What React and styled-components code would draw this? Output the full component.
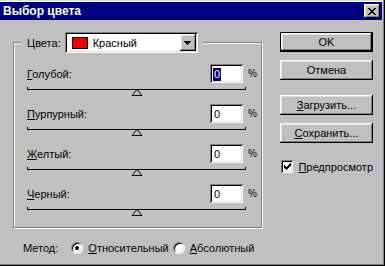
import styled, { createGlobalStyle } from "styled-components";

const GlobalStyle = createGlobalStyle`
  html, body {
    margin: 0;
    padding: 0;
    background: #c0c0c0;
  }
  body {
    font-family: "Liberation Sans", Arial, sans-serif;
    font-size: 11px;
    color: #000;
  }
`;

const raised = `
  box-shadow: inset -1px -1px 0 #000, inset 1px 1px 0 #fff,
    inset -2px -2px 0 #808080, inset 2px 2px 0 #dfdfdf;
`;

const sunken = `
  box-shadow: inset 1px 1px 0 #808080, inset -1px -1px 0 #fff,
    inset 2px 2px 0 #000, inset -2px -2px 0 #dfdfdf;
`;

const Window = styled.div`
  width: 385px;
  height: 266px;
  box-sizing: border-box;
  padding: 2px 3px 2px 0;
  background: #c0c0c0;
  box-shadow: inset -1px -1px 0 #000, inset -2px -2px 0 #808080,
    inset 0 1px 0 #dfdfdf, inset 0 2px 0 #fff;
  display: flex;
  flex-direction: column;
`;

const TitleBar = styled.div`
  height: 18px;
  background: #000080;
  color: #fff;
  display: flex;
  align-items: center;
  justify-content: space-between;
  padding: 0 2px 0 3px;
  font-weight: bold;
  font-size: 12px;
`;

const CloseButton = styled.div`
  width: 16px;
  height: 14px;
  background: #c0c0c0;
  display: flex;
  align-items: center;
  justify-content: center;
  ${raised}
`;

const Body = styled.div`
  display: flex;
  gap: 18px;
  padding: 12px 0 0 13px;
`;

const LeftColumn = styled.div`
  width: 249px;
  display: flex;
  flex-direction: column;
`;

const GroupBox = styled.fieldset`
  margin: 0;
  width: 249px;
  min-width: 0;
  box-sizing: border-box;
  padding: 11px 7px 3px 7px;
  border: 1px solid #808080;
  box-shadow: inset 1px 1px 0 #fff, 1px 1px 0 #fff;
`;

const Legend = styled.legend`
  padding: 0 5px 0 6px;
  background: #c0c0c0;
  display: flex;
  align-items: center;
  gap: 4px;
`;

const Combo = styled.div`
  width: 133px;
  height: 21px;
  box-sizing: border-box;
  background: #fff;
  padding: 2px 2px 2px 7px;
  display: flex;
  align-items: center;
  ${sunken}
`;

const Swatch = styled.span`
  width: 16px;
  height: 12px;
  box-sizing: border-box;
  border: 1px solid #000;
  background: ${(p) => p.color};
  margin-right: 5px;
`;

const DropButton = styled.span`
  margin-left: auto;
  width: 16px;
  height: 17px;
  background: #c0c0c0;
  display: flex;
  align-items: center;
  justify-content: center;
  ${raised}
`;

const Channel = styled.div`
  height: 40px;
  padding-left: 6px;
  display: flex;
  flex-direction: column;
`;

const ChannelHeader = styled.div`
  height: 19px;
  display: flex;
  align-items: center;
`;

const ChannelLabel = styled.span`
  flex: 1;
`;

const NumberBox = styled.div`
  width: 33px;
  height: 19px;
  box-sizing: border-box;
  background: #fff;
  padding: 2px 0 0 3px;
  display: flex;
  align-items: center;
  ${sunken}
`;

const Value = styled.span`
  line-height: 13px;
  padding: 0 1px;
  background: ${(p) => (p.selected ? "#000080" : "transparent")};
  color: ${(p) => (p.selected ? "#fff" : "#000")};
`;

const Percent = styled.span`
  width: 6px;
  margin-left: 5px;
  white-space: nowrap;
  font-size: 10px;
`;

const Track = styled.div`
  position: relative;
  width: 219px;
  height: 3px;
  margin-top: 4px;
  box-sizing: border-box;
  border: 1px solid #000;
  border-top: none;
`;

const Thumb = styled.svg`
  position: absolute;
  top: 100%;
  transform: translateX(-50%);
  display: block;
`;

const MethodRow = styled.div`
  margin-top: 13px;
  height: 13px;
  padding-left: 10px;
  display: flex;
  align-items: center;
`;

const MethodLabel = styled.span`
  margin-right: 13px;
`;

const RadioOption = styled.label`
  display: flex;
  align-items: center;
  gap: 5px;
  margin-right: 4px;
`;

const RadioCircle = styled.span`
  width: 12px;
  height: 12px;
  box-sizing: border-box;
  border-radius: 50%;
  background: #fff;
  border: 1px solid;
  border-color: #808080 #fff #fff #808080;
  box-shadow: inset 1px 1px 0 #000, inset -1px -1px 0 #dfdfdf;
  display: flex;
  align-items: center;
  justify-content: center;

  &::after {
    content: "";
    width: 4px;
    height: 4px;
    border-radius: 50%;
    background: ${(p) => (p.checked ? "#000" : "transparent")};
  }
`;

const RightColumn = styled.div`
  width: 93px;
  display: flex;
  flex-direction: column;
`;

const Button = styled.div`
  height: 20px;
  box-sizing: border-box;
  margin-top: ${(p) => p.gap || 0}px;
  display: flex;
  align-items: center;
  justify-content: center;
  background: #c0c0c0;
  ${(p) =>
    p.isDefault
      ? `border: 1px solid #000;
         box-shadow: inset -1px -1px 0 #000, inset 1px 1px 0 #fff,
           inset -2px -2px 0 #808080, inset 2px 2px 0 #dfdfdf;`
      : raised}
`;

const CheckRow = styled.label`
  margin-top: 17px;
  padding-left: 1px;
  display: flex;
  align-items: center;
  gap: 5px;
`;

const CheckBox = styled.span`
  width: 13px;
  height: 13px;
  box-sizing: border-box;
  background: #fff;
  display: flex;
  align-items: center;
  justify-content: center;
  ${sunken}
`;

const channels = [
  { key: "Г", rest: "олубой:", value: 0, selected: true },
  { key: "П", rest: "урпурный:", value: 0 },
  { key: "Ж", rest: "елтый:", value: 0 },
  { key: "Ч", rest: "ерный:", value: 0 },
];

const CloseGlyph = () => (
  <svg width="8" height="7" viewBox="0 0 8 7">
    <path
      fill="#000"
      d="M0 0h2v1h-2z M6 0h2v1h-2z M1 1h2v1h-2z M5 1h2v1h-2z M2 2h4v1h-4z M3 3h2v1h-2z M2 4h4v1h-4z M1 5h2v1h-2z M5 5h2v1h-2z M0 6h2v1h-2z M6 6h2v1h-2z"
    />
  </svg>
);

const ArrowGlyph = () => (
  <svg width="7" height="4" viewBox="0 0 7 4">
    <path fill="#000" d="M0 0h7v1h-7z M1 1h5v1h-5z M2 2h3v1h-3z M3 3h1v1h-1z" />
  </svg>
);

const CheckGlyph = () => (
  <svg width="7" height="7" viewBox="0 0 7 7">
    <path
      fill="#000"
      d="M6 0h1v1h-1z M5 1h2v1h-2z M0 2h1v1h-1z M4 2h3v1h-3z M0 3h2v1h-2z M3 3h3v1h-3z M0 4h5v1h-5z M1 5h3v1h-3z M2 6h1v1h-1z"
    />
  </svg>
);

const App = () => {
  return (
    <>
      <GlobalStyle />
      <Window>
        <TitleBar>
          <span>Выбор цвета</span>
          <CloseButton>
            <CloseGlyph />
          </CloseButton>
        </TitleBar>
        <Body>
          <LeftColumn>
            <GroupBox>
              <Legend>
                <span>Цвета:</span>
                <Combo>
                  <Swatch color="#f00000" />
                  <span>Красный</span>
                  <DropButton>
                    <ArrowGlyph />
                  </DropButton>
                </Combo>
              </Legend>
              {channels.map((c) => (
                <Channel key={c.key}>
                  <ChannelHeader>
                    <ChannelLabel>
                      <u>{c.key}</u>
                      {c.rest}
                    </ChannelLabel>
                    <NumberBox>
                      <Value selected={c.selected}>{c.value}</Value>
                    </NumberBox>
                    <Percent>%</Percent>
                  </ChannelHeader>
                  <Track>
                    <Thumb
                      width="11"
                      height="7"
                      viewBox="0 0 11 7"
                      style={{ left: `${50 + c.value / 2}%` }}
                    >
                      <polygon
                        points="5.5,0.5 10.5,6.5 0.5,6.5"
                        fill="#c0c0c0"
                        stroke="#000"
                        strokeWidth="1"
                      />
                    </Thumb>
                  </Track>
                </Channel>
              ))}
            </GroupBox>
            <MethodRow>
              <MethodLabel>Метод:</MethodLabel>
              <RadioOption>
                <RadioCircle checked />
                <span>
                  <u>О</u>тносительный
                </span>
              </RadioOption>
              <RadioOption>
                <RadioCircle />
                <span>
                  <u>А</u>бсолютный
                </span>
              </RadioOption>
            </MethodRow>
          </LeftColumn>
          <RightColumn>
            <Button isDefault>OK</Button>
            <Button gap={8}>Отмена</Button>
            <Button gap={15}>
              <span>
                <u>З</u>агрузить...
              </span>
            </Button>
            <Button gap={8}>
              <span>
                <u>С</u>охранить...
              </span>
            </Button>
            <CheckRow>
              <CheckBox>
                <CheckGlyph />
              </CheckBox>
              <span>
                <u>П</u>редпросмотр
              </span>
            </CheckRow>
          </RightColumn>
        </Body>
      </Window>
    </>
  );
};

export default App;
